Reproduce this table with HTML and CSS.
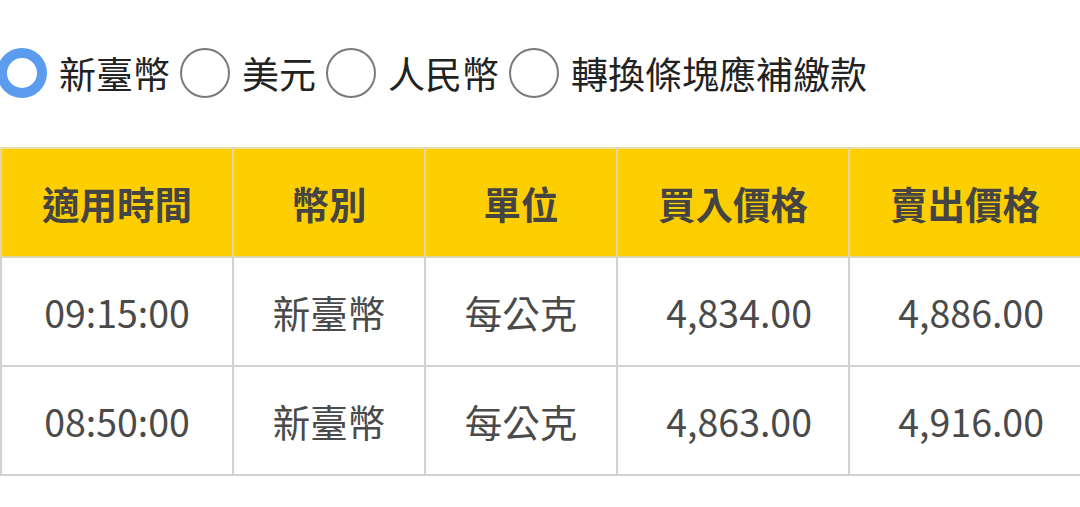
FILE: index.html
```html
<!DOCTYPE html>
<html lang="zh-Hant">
<head>
<meta charset="utf-8">
<link rel="stylesheet" href="styles.css">
</head>
<body>
<div class="options">
  <label class="opt"><span class="radio checked"></span><span class="lbl">新臺幣</span></label>
  <label class="opt"><span class="radio"></span><span class="lbl">美元</span></label>
  <label class="opt"><span class="radio"></span><span class="lbl">人民幣</span></label>
  <label class="opt"><span class="radio"></span><span class="lbl">轉換條塊應補繳款</span></label>
</div>
<table class="prices">
  <colgroup>
    <col class="c-wide"><col class="c-narrow"><col class="c-narrow"><col class="c-wide"><col class="c-wide">
  </colgroup>
  <thead>
    <tr><th>適用時間</th><th>幣別</th><th>單位</th><th>買入價格</th><th>賣出價格</th></tr>
  </thead>
  <tbody>
    <tr><td>09:15:00</td><td>新臺幣</td><td>每公克</td><td class="num">4,834.00</td><td class="num">4,886.00</td></tr>
    <tr><td>08:50:00</td><td>新臺幣</td><td>每公克</td><td class="num">4,863.00</td><td class="num">4,916.00</td></tr>
  </tbody>
</table>
</body>
</html>
```
FILE: styles.css
```css
html, body {
  margin: 0;
  padding: 0;
  background: #fff;
  font-family: "Noto Sans CJK TC", "Noto Sans", sans-serif;
  color: #222;
}
.options {
  display: flex;
  align-items: center;
  height: 50px;
  margin-top: 48px;
  margin-left: -3px;
}
.opt {
  display: flex;
  align-items: center;
}
.radio {
  box-sizing: border-box;
  width: 50px;
  height: 50px;
  border-radius: 50%;
  border: 2px solid #7a7a7a;
  flex: none;
}
.radio.checked {
  border: 10px solid #5b9cef;
}
.lbl {
  font-size: 37px;
  line-height: 50px;
  margin-left: 12px;
  margin-right: 10px;
  color: #222;
}
.prices {
  margin-top: 49px;
  width: 1080px;
  border-collapse: collapse;
  table-layout: fixed;
  font-size: 37.5px;
}
.c-wide { width: 232px; }
.c-narrow { width: 192px; }
.prices th, .prices td {
  border: 2px solid #d2d2d2;
  height: 107px;
  padding: 0;
  text-align: center;
  vertical-align: middle;
}
.prices th {
  background: #fecf00;
  color: #444;
  font-weight: 700;
  border-color: #dcd6a8;
}
.prices thead tr:first-child th { border-top-color: #e6dfa8; }
.prices td {
  color: #4a4a4a;
  font-weight: 400;
}
.prices td.num {
  text-align: right;
  padding-right: 36px;
}
```
